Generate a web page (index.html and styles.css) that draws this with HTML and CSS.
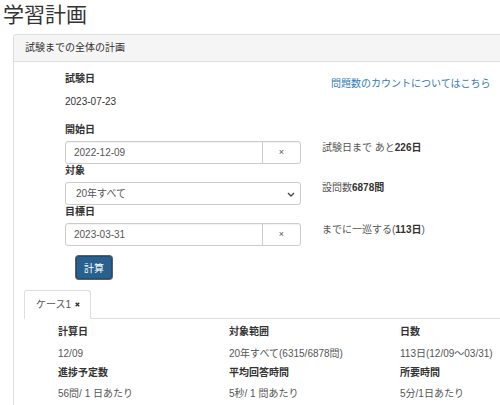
FILE: index.html
```html
<!DOCTYPE html>
<html lang="ja">
<head>
<meta charset="utf-8">
<title>学習計画</title>
<link rel="stylesheet" href="styles.css">
</head>
<body>
<h1 class="title">学習計画</h1>
<div class="panel">
  <div class="panel-heading">試験までの全体の計画</div>
  <div class="panel-body">
    <div class="form-row first">
      <div class="col-left">
        <div class="label">試験日</div>
        <div class="static">2023-07-23</div>
      </div>
      <div class="col-right">
        <a class="help-link" href="#">問題数のカウントについてはこちら</a>
      </div>
    </div>
    <div class="form-row">
      <div class="col-left">
        <div class="label">開始日</div>
        <div class="input-group">
          <div class="input">2022-12-09</div>
          <div class="addon">×</div>
        </div>
      </div>
      <div class="col-right"><p class="note n1">試験日まで あと<b>226日</b></p></div>
    </div>
    <div class="form-row">
      <div class="col-left">
        <div class="label">対象</div>
        <div class="select">
          <span>20年すべて</span>
          <svg class="chev" width="8" height="5" viewBox="0 0 8 5"><path d="M1 1 L4 4 L7 1" fill="none" stroke="#444" stroke-width="1.3"/></svg>
        </div>
      </div>
      <div class="col-right"><p class="note n2">設問数<b>6878問</b></p></div>
    </div>
    <div class="form-row">
      <div class="col-left">
        <div class="label">目標日</div>
        <div class="input-group">
          <div class="input">2023-03-31</div>
          <div class="addon">×</div>
        </div>
      </div>
      <div class="col-right"><p class="note n3">までに一巡する(<b>113日</b>)</p></div>
    </div>
    <button class="btn" type="button">計算</button>

    <div class="tabs">
      <div class="tab">ケース1<svg class="x" width="7" height="7" viewBox="0 0 7 7"><path d="M1 1 L6 6 M6 1 L1 6" stroke="#333" stroke-width="2"/></svg></div>
    </div>
    <div class="tab-content">
      <div class="grid">
        <div class="item"><div class="dt">計算日</div><div class="dd">12/09</div></div>
        <div class="item"><div class="dt">対象範囲</div><div class="dd">20年すべて(6315/6878問)</div></div>
        <div class="item"><div class="dt">日数</div><div class="dd">113日(12/09～03/31)</div></div>
        <div class="item"><div class="dt">進捗予定数</div><div class="dd">56問/ 1 日あたり</div></div>
        <div class="item"><div class="dt">平均回答時間</div><div class="dd">5秒/ 1 問あたり</div></div>
        <div class="item"><div class="dt">所要時間</div><div class="dd">5分/1日あたり</div></div>
      </div>
    </div>
  </div>
</div>
</body>
</html>
```
FILE: styles.css
```css
html, body {
  margin: 0;
  padding: 0;
  background: #fff;
  overflow: hidden;
}
body {
  width: 500px;
  height: 405px;
  font-family: "Liberation Sans", "Noto Sans CJK JP", sans-serif;
  font-size: 10px;
  line-height: 14px;
  color: #333;
}
.title {
  margin: 0;
  padding: 0 0 0 3px;
  height: 34px;
  font-size: 21px;
  line-height: 30px;
  font-weight: 400;
  color: #333;
}
.panel {
  margin-left: 13px;
  height: 371px;
  border: 1px solid #ddd;
  border-right: 0;
  border-bottom: 0;
  border-radius: 3px 0 0 0;
  box-sizing: border-box;
  overflow: hidden;
}
.panel-heading {
  height: 26px;
  line-height: 26px;
  padding-left: 11px;
  background: #f5f5f5;
  border-bottom: 1px solid #ddd;
  border-radius: 3px 0 0 0;
  color: #333;
}
.panel-body {
  padding: 10px 0 0 10px;
}
.form-row {
  display: grid;
  grid-template-columns: 236px 1fr;
  column-gap: 21px;
  padding-left: 41px;
}
.form-row.first {
  margin-bottom: 9px;
}
.label {
  font-weight: 700;
  line-height: 14px;
  margin-bottom: 4px;
}
.static {
  padding: 5px 0;
  line-height: 14px;
}
.help-link {
  display: inline-block;
  margin: 5px 0 0 9px;
  color: #337ab7;
  text-decoration: none;
}
.note {
  margin: 18px 0 0 0;
  color: #555;
}
.note b { color: #333; }
.note.n2 { margin-top: 17px; }
.input-group {
  display: flex;
  height: 23px;
  box-sizing: border-box;
  border: 1px solid #ccc;
  border-radius: 3px;
  box-shadow: inset 0 1px 1px rgba(0,0,0,0.05);
}
.input {
  flex: 1;
  line-height: 21px;
  padding-left: 8px;
  color: #555;
  border-right: 1px solid #ccc;
}
.addon {
  width: 37px;
  text-align: center;
  line-height: 21px;
  font-size: 9px;
  color: #555;
}
.select {
  display: flex;
  align-items: center;
  justify-content: space-between;
  height: 23px;
  box-sizing: border-box;
  border: 1px solid #ccc;
  border-radius: 3px;
  padding: 0 5px 0 10px;
  color: #555;
}
.chev { margin-top: 1px; }
.btn {
  display: block;
  margin: 10px 0 0 52px;
  width: 36px;
  height: 23px;
  padding: 0;
  font-family: inherit;
  font-size: 10px;
  color: #fff;
  background: #286090;
  border: 1px solid #204d74;
  border-radius: 3px;
  box-shadow: 0 0 0 1px #5f5f5f;
}
.tabs {
  margin-top: 11px;
  display: flex;
  border-bottom: 1px solid #ddd;
  height: 28px;
}
.tab {
  height: 29px;
  box-sizing: border-box;
  padding: 0 10px 0 11px;
  line-height: 26px;
  border: 1px solid #ddd;
  border-bottom-color: #fff;
  border-radius: 3px 3px 0 0;
  background: #fff;
  color: #555;
  white-space: nowrap;
  display: flex;
  align-items: center;
  gap: 4px;
  width: 67px;
}
.tab-content {
  padding: 6px 0 0 34px;
}
.grid {
  display: grid;
  grid-template-columns: 171px 171px 1fr;
  row-gap: 5px;
}
.item { white-space: nowrap; }
.dt {
  font-weight: 700;
  line-height: 14px;
}
.dd {
  margin-top: 8px;
  line-height: 14px;
  color: #555;
}
.grid .item:nth-child(n+4) .dd { margin-top: 7px; }
```
